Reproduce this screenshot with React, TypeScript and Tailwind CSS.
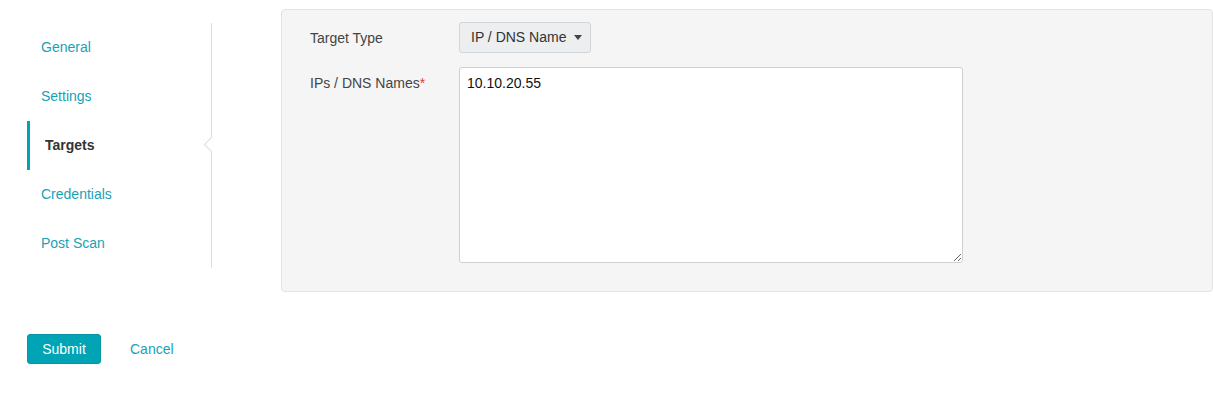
export default function App() {
  const items = ["General", "Settings", "Targets", "Credentials", "Post Scan"]

  return (
    <div className="pt-[9px] text-[14px] font-['Liberation_Sans',Arial,sans-serif] bg-white min-h-[410px]">
      <div className="flex">
        <div className="w-[281px] shrink-0 pl-[27px] pt-[14px]">
          <div className="relative w-[185px] border-r border-[#dddddd]">
            {items.map((item) =>
              item === "Targets" ? (
                <div
                  key={item}
                  className="h-[49px] flex items-center border-l-[3px] border-[#00a4b4] pl-[15px] font-bold text-[#333333]"
                >
                  {item}
                </div>
              ) : (
                <div key={item} className="h-[49px] flex items-center pl-[14px] text-[#17a2b8]">
                  {item}
                </div>
              )
            )}
            <div className="absolute top-[116px] right-[-6px] w-[11px] h-[11px] rotate-45 bg-white border-l border-b border-[#dddddd]" />
          </div>
        </div>

        <div className="flex-1 h-[283px] bg-[#f5f5f5] border border-[#e3e3e3] rounded-[4px] pt-[12px] pl-[28px]">
          <div className="flex items-center">
            <div className="w-[149px] text-[#444444] leading-[20px]">Target Type</div>
            <button className="h-[31px] flex items-center pl-[11px] pr-[8px] bg-[#eceeef] border border-[#d3d6d8] rounded-[3px] text-[#333333]">
              IP / DNS Name
              <span className="ml-[8px] w-0 h-0 border-l-[4.5px] border-r-[4.5px] border-t-[5px] border-l-transparent border-r-transparent border-t-[#444444]" />
            </button>
          </div>
          <div className="flex mt-[14px]">
            <div className="w-[149px] pt-[6px] text-[#444444] leading-[20px]">
              IPs / DNS Names<span className="text-[#e53935]">*</span>
            </div>
            <textarea
              defaultValue="10.10.20.55"
              className="w-[504px] h-[196px] bg-white border border-[#d0d0d0] rounded-[3px] px-[7px] pt-[5px] leading-[20px] text-[#111111] outline-none"
            />
          </div>
        </div>
      </div>

      <div className="flex items-center pl-[27px] mt-[42px]">
        <button className="w-[74px] h-[30px] bg-[#00a4b4] border border-[#0b95a3] rounded-[3px] text-white">
          Submit
        </button>
        <span className="ml-[29px] text-[#17a2b8]">Cancel</span>
      </div>
    </div>
  )
}
